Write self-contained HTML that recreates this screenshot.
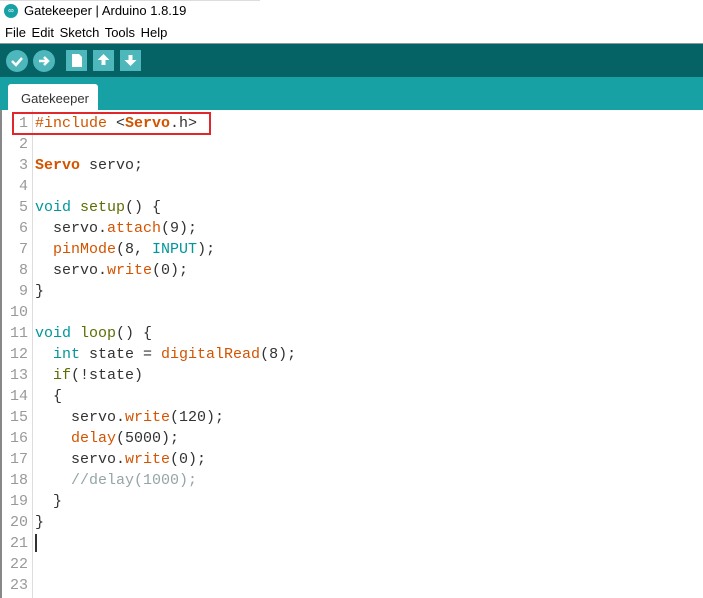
<!DOCTYPE html>
<html><head><style>
body{margin:0;width:703px;height:598px;overflow:hidden;background:#fff;font-family:"Liberation Sans",sans-serif;position:relative}
.a{position:absolute}
.code{font-family:"Liberation Mono",monospace;font-size:15px;color:#333;white-space:pre}
.ln{position:absolute;left:0;width:28px;text-align:right;color:#999;font-family:"Liberation Mono",monospace;font-size:15px}
.o{color:#D35400}.t{color:#00979C}.g{color:#5E6D03}.c{color:#95A5A6}
.btn{position:absolute;top:50px;width:22px;height:22px;border-radius:50%;background:#4DB7BB}
.sq{position:absolute;top:50px;width:21px;height:21px;background:#4DB7BB}
</style></head><body>
<div class="a" style="left:0;top:0;width:260px;height:1px;background:#ddd"></div>
<div class="a" style="left:4px;top:4px;width:14px;height:14px;border-radius:50%;background:#17A1A5;color:#fff;font-size:8px;line-height:14px;text-align:center">∞</div>
<div class="a" style="left:24px;top:3px;font-size:13px;color:#000">Gatekeeper | Arduino 1.8.19</div>
<div class="a" style="left:5px;top:25px;font-size:13px;color:#000;word-spacing:2px">File Edit Sketch Tools Help</div>
<div class="a" style="left:0;top:43px;width:703px;height:1px;background:#8a9a9c"></div>
<div class="a" style="left:0;top:44px;width:703px;height:33px;background:#056365"></div>
<div class="btn" style="left:6px"><svg width="22" height="22"><path d="M6 11l4 4 6-7" stroke="#fff" stroke-width="2.5" fill="none"/></svg></div>
<div class="btn" style="left:33px"><svg width="22" height="22"><path d="M6 11h9M11 7l4 4-4 4" stroke="#fff" stroke-width="2.5" fill="none"/></svg></div>
<div class="sq" style="left:66px"><svg width="21" height="21"><path d="M6 4h7l3 3v10H6z" fill="#fff"/></svg></div>
<div class="sq" style="left:93px"><svg width="21" height="21"><path d="M10.5 4l6 6h-4v5h-4v-5h-4z" fill="#fff"/></svg></div>
<div class="sq" style="left:120px"><svg width="21" height="21"><path d="M10.5 16l6-6h-4V5h-4v5h-4z" fill="#fff"/></svg></div>
<div class="a" style="left:0;top:77px;width:703px;height:33px;background:#17A1A5"></div>
<div class="a" style="left:8px;top:84px;width:90px;height:26px;background:#fff;border-radius:3px 3px 0 0"></div>
<div class="a" style="left:21px;top:91px;font-size:13px;color:#333">Gatekeeper</div>
<div class="a" style="left:0;top:110px;width:2px;height:488px;background:#888"></div>
<div class="a" style="left:32px;top:110px;width:1px;height:488px;background:#ddd"></div>
<div class="a" style="left:12px;top:112px;width:195px;height:19px;border:2px solid #E0272B"></div>
<div class="a" style="left:35px;top:534px;width:2px;height:18px;background:#333"></div>
<div class="a" style="left:0;top:113px;line-height:21px">
<div style="position:relative">
<div class="ln" style="top:0">1<br>2<br>3<br>4<br>5<br>6<br>7<br>8<br>9<br>10<br>11<br>12<br>13<br>14<br>15<br>16<br>17<br>18<br>19<br>20<br>21<br>22<br>23</div>
<div class="code a" style="left:35px;top:0;line-height:21px"><span class="o">#include</span> &lt;<span class="o"><b>Servo</b></span>.h&gt;

<span class="o"><b>Servo</b></span> servo;

<span class="t">void</span> <span class="g">setup</span>() {
  servo.<span class="o">attach</span>(9);
  <span class="o">pinMode</span>(8, <span class="t">INPUT</span>);
  servo.<span class="o">write</span>(0);
}

<span class="t">void</span> <span class="g">loop</span>() {
  <span class="t">int</span> state = <span class="o">digitalRead</span>(8);
  <span class="g">if</span>(!state)
  {
    servo.<span class="o">write</span>(120);
    <span class="o">delay</span>(5000);
    servo.<span class="o">write</span>(0);
    <span class="c">//delay(1000);</span>
  }
}
</div></div></div>
</body></html>
